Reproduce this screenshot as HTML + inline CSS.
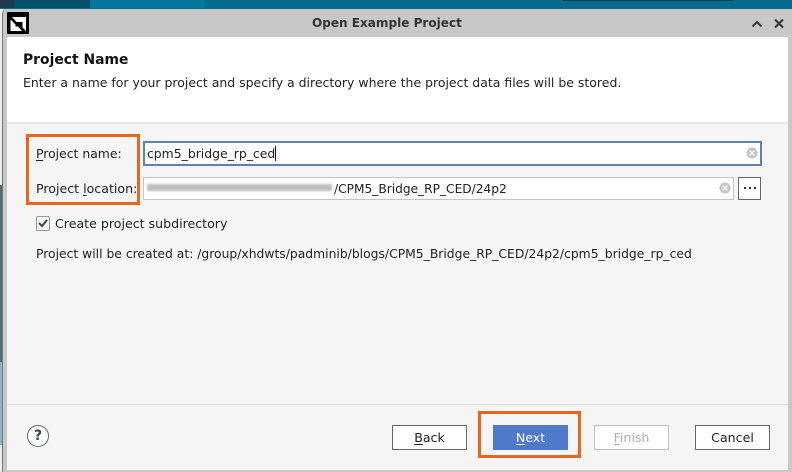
<!DOCTYPE html>
<html><head><meta charset="utf-8">
<style>
html,body{margin:0;padding:0;width:792px;height:472px;overflow:hidden;background:#c8c8c8}
*{box-sizing:border-box}
.a{position:absolute;white-space:pre;font-family:"DejaVu Sans",sans-serif;font-size:12.4px;color:#222;line-height:16px}
.b{position:absolute}
u{text-underline-offset:2px}
.btn{position:absolute;top:425px;height:25px;width:75px;background:#fff;border:1px solid #666;text-align:center;line-height:23px;font-family:"DejaVu Sans",sans-serif;font-size:12.6px;color:#222}
</style></head><body>
<!-- desktop backdrop -->
<div class="b" style="left:0;top:0;width:792px;height:9px;background:#046a8e"></div>
<div class="b" style="left:0;top:0;width:14px;height:8px;background:#1f3a48"></div>
<div class="b" style="left:14px;top:0;width:76px;height:8px;background:#06506c"></div>
<div class="b" style="left:90px;top:0;width:115px;height:8px;background:#03779d"></div>
<div class="b" style="left:563px;top:0;width:171px;height:1px;background:#033f62"></div>
<div class="b" style="left:0;top:9px;width:3px;height:463px;background:#eee"></div>
<div class="b" style="left:0;top:185px;width:3px;height:177px;background:#4d6d6c"></div>
<div class="b" style="left:0;top:362px;width:3px;height:83px;background:#8cb4cf"></div>
<!-- dialog frame -->
<div class="b" style="left:2px;top:9px;width:790px;height:463px;background:#c8c8c8;border-left:1px solid #777;border-top-left-radius:5px"></div>
<!-- header -->
<div class="b" style="left:7px;top:37px;width:781px;height:85px;background:#fff"></div>
<div class="b" style="left:7px;top:122px;width:781px;height:2px;background:#e6e6e6"></div>
<!-- body -->
<div class="b" style="left:7px;top:124px;width:781px;height:346px;background:#f5f5f5"></div>
<div class="b" style="left:7px;top:404px;width:781px;height:1px;background:#e2e2e2"></div>
<!-- logo -->
<svg class="b" style="left:7px;top:12px" width="22" height="22" viewBox="0 0 22 22"><rect width="22" height="22" fill="#000"/><path d="M5 5H19V19L15.500 15.500V10H9.500Z" fill="#fff"/><path d="M3.500 7.500L8.500 12.500V14.500H11L15 19H3.500Z" fill="#fff"/><path d="M9.500 12.500L12.500 10H15V13L12.500 15Z" fill="#000"/></svg>
<!-- title -->
<div class="a" style="left:312px;top:15px;font-weight:bold;font-size:12.06px;color:#333">Open Example Project</div>
<svg class="b" style="left:750px;top:18px" width="36" height="12" viewBox="0 0 36 12"><path d="M2.500 8.500L7 4L11.500 8.500" fill="none" stroke="#333" stroke-width="2"/><path d="M25 1.500L33 9.500M33 1.500L25 9.500" fill="none" stroke="#333" stroke-width="2"/></svg>
<!-- header text -->
<div class="a" style="left:23px;top:52px;font-weight:bold;font-size:13.9px;color:#111">Project Name</div>
<div class="a" style="left:23px;top:75px;color:#222;font-size:12.48px">Enter a name for your project and specify a directory where the project data files will be stored.</div>
<!-- labels -->
<div class="a" style="left:36px;top:146px"><u>P</u>roject name:</div>
<div class="a" style="left:36px;top:181px;font-size:12.6px">Project <u>l</u>ocation:</div>
<!-- name field -->
<div class="b" style="left:143px;top:141px;width:619px;height:25px;background:#fff;border:2px solid #5f81ad"></div>
<div class="a" style="left:147px;top:146px">cpm5_bridge_rp_ced</div>
<div class="b" style="left:275px;top:146px;width:1px;height:15px;background:#111"></div>
<svg class="b" style="left:746px;top:147px" width="12" height="12" viewBox="0 0 12 12"><circle cx="6" cy="6" r="5.500" fill="#c4c4c4"/><path d="M3.500 3.500L8.500 8.500M8.500 3.500L3.500 8.500" stroke="#f4f4f4" stroke-width="1.400"/></svg>
<!-- location field -->
<div class="b" style="left:143px;top:177px;width:591px;height:23px;background:#fff;border:1px solid #c4c4c4"></div>
<div class="b" style="left:147px;top:184px;width:185px;height:7px;background:#bdbdbd;filter:blur(1px)"></div>
<div class="a" style="left:334px;top:181px;font-size:12.2px">/CPM5_Bridge_RP_CED/24p2</div>
<svg class="b" style="left:719px;top:182px" width="12" height="12" viewBox="0 0 12 12"><circle cx="6" cy="6" r="5.500" fill="#c4c4c4"/><path d="M3.500 3.500L8.500 8.500M8.500 3.500L3.500 8.500" stroke="#f4f4f4" stroke-width="1.400"/></svg>
<div class="b" style="left:738px;top:177px;width:23px;height:23px;background:#fff;border:1px solid #666"></div>
<div class="b" style="left:744px;top:187px;width:2px;height:2px;background:#333"></div>
<div class="b" style="left:749px;top:187px;width:2px;height:2px;background:#333"></div>
<div class="b" style="left:754px;top:187px;width:2px;height:2px;background:#333"></div>
<!-- checkbox -->
<div class="b" style="left:36px;top:216px;width:14px;height:15px;background:#f2f2f2;border:1px solid #999;border-radius:2px"></div>
<svg class="b" style="left:36px;top:216px" width="14" height="14" viewBox="0 0 14 14"><path d="M3 7L6 10L11 4" fill="none" stroke="#444" stroke-width="2"/></svg>
<div class="a" style="left:55px;top:216px;font-size:12.6px">Create project subdirectory</div>
<div class="a" style="left:36px;top:246px;font-size:12.35px">Project will be created at: /group/xhdwts/padminib/blogs/CPM5_Bridge_RP_CED/24p2/cpm5_bridge_rp_ced</div>
<!-- help -->
<div class="b" style="left:27px;top:425px;width:22px;height:22px;border:1px solid #666;border-radius:50%;background:#fff;text-align:center;font:bold 14px/20px 'DejaVu Sans',sans-serif;color:#34405c">?</div>
<!-- buttons -->
<div class="btn" style="left:392px"><u>B</u>ack</div>
<div class="btn" style="left:493px;background:#4f7acb;border-color:#4f7acb;color:#fff"><u>N</u>ext</div>
<div class="btn" style="left:594px;border-color:#c0c0c0;color:#b0b0b0"><u>F</u>inish</div>
<div class="btn" style="left:695px">Cancel</div>
<!-- orange highlights -->
<div class="b" style="left:26px;top:134px;width:114px;height:71px;border:3px solid #e8661f"></div>
<div class="b" style="left:478px;top:411px;width:103px;height:47px;border:3px solid #e8661f"></div>
</body></html>
